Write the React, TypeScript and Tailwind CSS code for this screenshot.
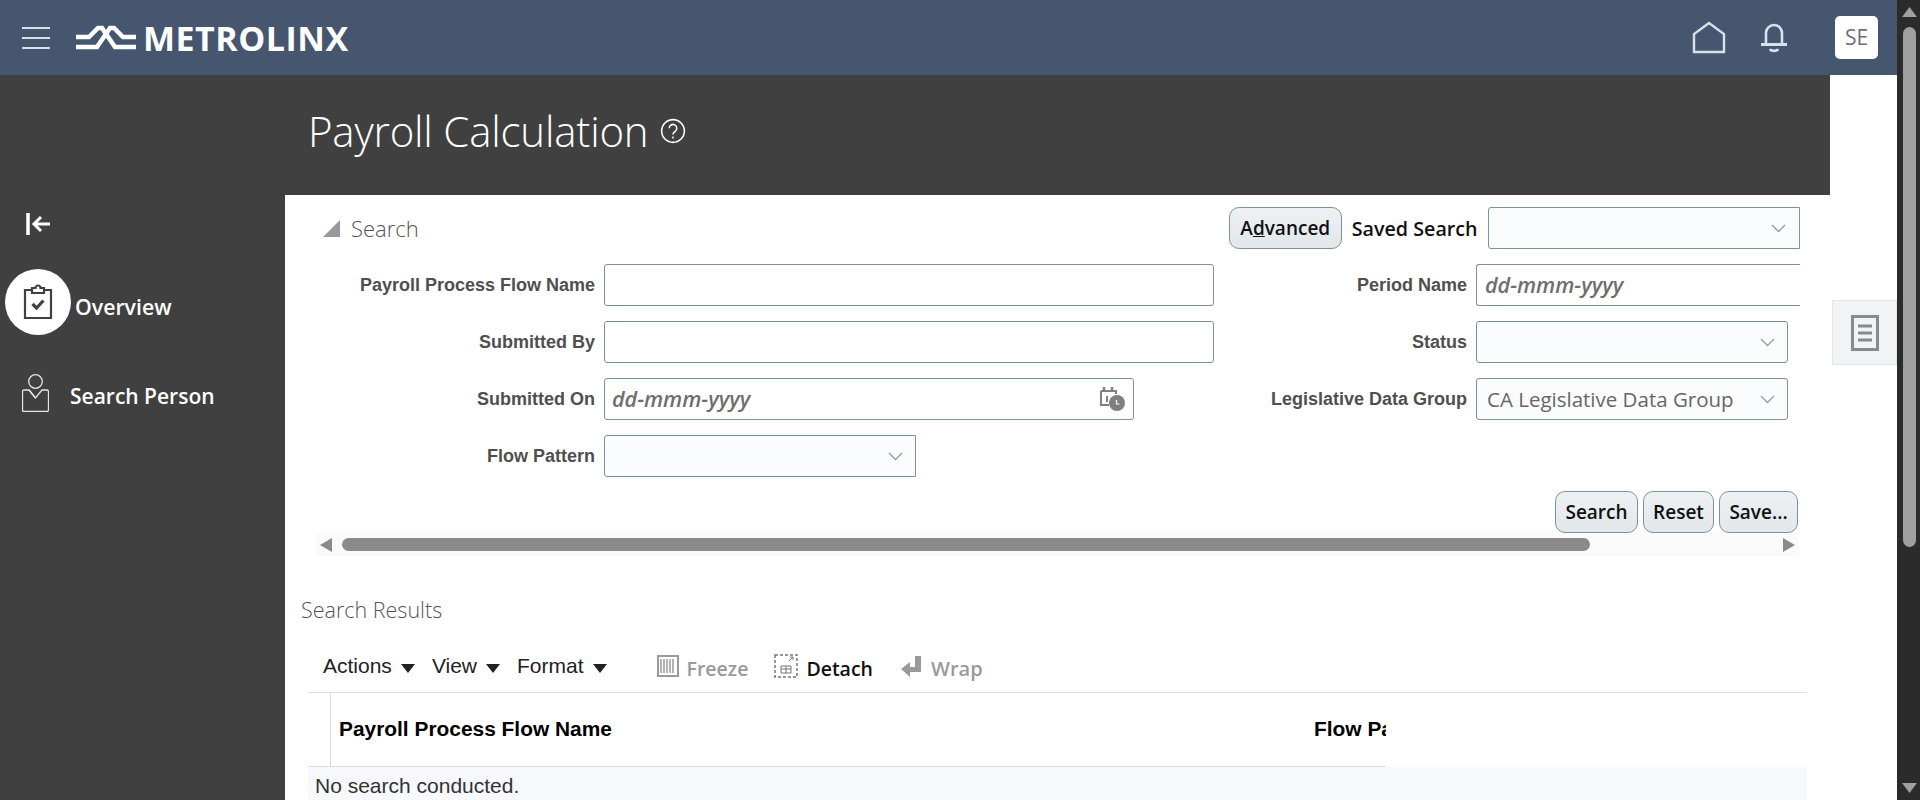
import React from 'react';

const sans = "font-['Open_Sans','Noto_Sans',sans-serif]";
const arial = "font-['Liberation_Sans',Arial,sans-serif]";

const Chevron = () => (
  <svg width="15" height="9" viewBox="0 0 15 9" fill="none" stroke="#989ea4" strokeWidth="1.400">
    <path d="M1 1l6.500 6.500L14 1" />
  </svg>
);

const Caret = () => (
  <svg width="14" height="9" viewBox="0 0 14 9" className="mt-1 ml-[9px] shrink-0" fill="#222">
    <path d="M0 0h14L7 9z" />
  </svg>
);

const Logo = () => (
  <svg width="60" height="26" viewBox="0 0 60 26" fill="none" stroke="#fff" strokeWidth="4.500">
    <path d="M0 12h13l9-9h4l13 19h21" />
    <path d="M60 12H47l-9-9h-4L21 22H0" />
  </svg>
);

const Field = ({ label, children, labelWidth }: { label: string; children: React.ReactNode; labelWidth: string }) => (
  <div className="flex items-start gap-[9px]">
    <div className={`${labelWidth} ${arial} shrink-0 pt-[11px] text-right text-[18px] leading-[20px] font-bold text-[#4f4f4f]`}>
      {label}
    </div>
    {children}
  </div>
);

const box = 'flex h-[42px] items-center rounded-[3px] border border-[#7b929e]';

const Btn = ({ children, className = '' }: { children: React.ReactNode; className?: string }) => (
  <button className={`${sans} flex h-[42px] items-center justify-center rounded-[10px] border border-[#7b929e] bg-gradient-to-b from-[#eef1f3] to-[#e2e7ea] text-[19px] font-semibold text-[#111] ${className}`}>
    {children}
  </button>
);

const dateText = `${sans} text-[21.500px] font-semibold text-[#6e6e6e] italic`;

export default function App() {
  return (
    <div className="flex h-[800px] w-[1920px] overflow-hidden bg-white">
      <div className="flex w-[1897px] flex-col">
        {/* top bar */}
        <header className="flex h-[75px] shrink-0 items-center bg-[#46566f]">
          <div className="ml-[22px] flex w-[28px] flex-col gap-[8px]">
            <div className="h-[2px] bg-[#d8e0ea]" />
            <div className="h-[2px] bg-[#d8e0ea]" />
            <div className="h-[2px] bg-[#d8e0ea]" />
          </div>
          <div className="ml-[26px]"><Logo /></div>
          <div className={`${sans} ml-[7px] text-[34px] leading-none font-bold tracking-[0.5px] text-white`}>METROLINX</div>
          <div className="ml-auto flex items-center">
            <svg width="34" height="33" viewBox="0 0 34 33" fill="none" stroke="#d8e0ea" strokeWidth="2.400">
              <path d="M2 31V13L17 2l15 11v18z" />
            </svg>
            <svg className="ml-[34px]" width="28" height="32" viewBox="0 0 28 32" fill="none" stroke="#d8e0ea" strokeWidth="2.600">
              <path d="M6 21V11a8 8 0 0 1 16 0v10" />
              <path d="M1 22.500h26" strokeWidth="3" />
              <path d="M10 27c1 2.500 7 2.500 8 0" />
            </svg>
            <div className={`${sans} mr-[19px] ml-[47px] flex h-[43px] w-[43px] items-center justify-center rounded-[5px] bg-white text-[21px] text-[#707070]`}>SE</div>
          </div>
        </header>

        <div className="flex min-h-0 flex-1">
          {/* left nav */}
          <nav className="flex w-[285px] shrink-0 flex-col bg-[#404040] text-white">
            <svg className="mt-[137px] ml-[26px] shrink-0" width="25" height="24" viewBox="0 0 25 24" fill="none" stroke="#fff">
              <path d="M2 1v22" strokeWidth="3.500" />
              <path d="M24 12H9M15 5l-7 7 7 7" strokeWidth="3" />
            </svg>
            <div className="mt-[33px] flex items-center">
              <div className="ml-[5px] flex h-[66px] w-[66px] items-center justify-center rounded-full bg-white">
                <svg width="30" height="36" viewBox="0 0 30 36" fill="none" stroke="#404040" strokeWidth="2.200">
                  <path d="M9 6H2v28h26V6h-7" />
                  <path d="M9 9V4h3.500a2.500 2.500 0 0 1 5 0H21v5z" />
                  <path d="M9.500 20l4 4L20.500 16.500" strokeWidth="3.200" />
                </svg>
              </div>
              <span className={`${sans} ml-[4px] pt-[10px] text-[21.300px] font-semibold`}>Overview</span>
            </div>
            <div className="mt-[38px] flex items-center">
              <svg className="ml-[22px]" width="27" height="38" viewBox="0 0 27 38" fill="none" stroke="#e6e6e6" strokeWidth="1.300">
                <circle cx="13.500" cy="7.500" r="6.800" />
                <path d="M7 16H2a1.500 1.500 0 0 0-1.500 1.500V36a1.500 1.500 0 0 0 1.500 1.500h23a1.500 1.500 0 0 0 1.500-1.500V17.500A1.500 1.500 0 0 0 25 16h-5l-6.500 8z" />
                <path d="M7 16l6.500 8" />
              </svg>
              <span className={`${sans} ml-[21px] pt-[8px] text-[21px] font-semibold`}>Search Person</span>
            </div>
          </nav>

          {/* page */}
          <main className="flex w-[1545px] shrink-0 flex-col overflow-hidden">
            <div className="flex h-[120px] shrink-0 items-center bg-[#404040] pb-[8px] pl-[23px]">
              <h1 className={`${sans} text-[42px] leading-none font-light tracking-[-0.2px] text-white`}>Payroll Calculation</h1>
              <svg className="ml-[12px]" width="26" height="26" viewBox="0 0 24 24" fill="none" stroke="#fff" strokeWidth="1.400">
                <circle cx="12" cy="12" r="10.500" />
                <path d="M8.500 9.500a3.500 3.500 0 1 1 5.500 2.800c-1.300.9-2 1.400-2 3" />
                <path d="M12 17v2" />
              </svg>
            </div>

            {/* search panel */}
            <div className="flex shrink-0 items-start pt-[12px] pl-[38px]">
              <svg className="mt-[13px] shrink-0" width="17" height="17" viewBox="0 0 17 17" fill="#969a9e"><path d="M17 0v17H0z" /></svg>
              <span className={`${sans} mt-[6px] ml-[11px] text-[22px] leading-[30px] font-light text-[#555]`}>Search</span>
              <Btn className="ml-[810px] w-[113px] shrink-0"><span>A<u>d</u>vanced</span></Btn>
              <span className={`${sans} ml-[10px] pt-[1px] text-[19.700px] leading-[41px] font-semibold whitespace-nowrap text-[#111]`}>Saved Search</span>
              <div className={`${box} ml-[10px] w-[312px] shrink-0 justify-end rounded-r-none bg-[#fbfcfd] pr-[13px]`}><Chevron /></div>
            </div>

            <div className="mt-[15px] flex shrink-0">
              <div className="flex flex-col gap-[15px]">
                <Field label="Payroll Process Flow Name" labelWidth="w-[310px]">
                  <div className={`${box} w-[610px] bg-white`} />
                </Field>
                <Field label="Submitted By" labelWidth="w-[310px]">
                  <div className={`${box} w-[610px] bg-white`} />
                </Field>
                <Field label="Submitted On" labelWidth="w-[310px]">
                  <div className={`${box} w-[530px] justify-between bg-white pr-[8px] pl-[7px]`}>
                    <span className={dateText}>dd-mmm-yyyy</span>
                    <svg width="25" height="26" viewBox="0 0 25 26" fill="none">
                      <path d="M1 5h15v3M1 5v14h8" stroke="#7f7f7f" strokeWidth="2" />
                      <path d="M4 1v4M12 1v4" stroke="#7f7f7f" strokeWidth="2.500" />
                      <path d="M7 10v6" stroke="#555" strokeWidth="1.500" />
                      <circle cx="17" cy="17" r="8" fill="#7f7f7f" />
                      <path d="M16.500 14v4l3 0" stroke="#fff" strokeWidth="1.200" />
                    </svg>
                  </div>
                </Field>
                <Field label="Flow Pattern" labelWidth="w-[310px]">
                  <div className={`${box} w-[312px] justify-end rounded-r-none bg-[#fbfcfd] pr-[12px]`}><Chevron /></div>
                </Field>
              </div>
              <div className="ml-[17px] flex flex-col gap-[15px]">
                <Field label="Period Name" labelWidth="w-[236px]">
                  <div className={`${box} w-[324px] rounded-r-none border-r-0 bg-white pl-[8px]`}>
                    <span className={dateText}>dd-mmm-yyyy</span>
                  </div>
                </Field>
                <Field label="Status" labelWidth="w-[236px]">
                  <div className={`${box} w-[312px] justify-end bg-[#fbfcfd] pr-[12px]`}><Chevron /></div>
                </Field>
                <Field label="Legislative Data Group" labelWidth="w-[236px]">
                  <div className={`${box} w-[312px] justify-between bg-[#fbfcfd] pr-[12px] pl-[10px]`}>
                    <span className={`${sans} text-[20.500px] whitespace-nowrap text-[#666]`}>CA Legislative Data Group</span>
                    <Chevron />
                  </div>
                </Field>
              </div>
            </div>

            <div className="mt-[14px] flex w-[1513px] shrink-0 justify-end gap-[5px]">
              <Btn className="w-[83px]">Search</Btn>
              <Btn className="w-[71px]">Reset</Btn>
              <Btn className="w-[79px]">Save...</Btn>
            </div>

            {/* horizontal scroller */}
            <div className="ml-[31px] flex h-[23px] w-[1483px] shrink-0 items-center bg-[#fafafa] pr-[4px] pl-[4px]">
              <svg width="12" height="14" viewBox="0 0 12 14" fill="#8a8a8a"><path d="M12 0v14L0 7z" /></svg>
              <div className="ml-[10px] h-[13px] w-[1248px] rounded-full bg-[#8a8a8a]" />
              <svg className="ml-auto" width="12" height="14" viewBox="0 0 12 14" fill="#8a8a8a"><path d="M0 0v14l12-7z" /></svg>
            </div>

            <div className={`${sans} mt-[39px] ml-[16px] shrink-0 text-[21.500px] leading-[30px] font-light text-[#555]`}>Search Results</div>

            {/* toolbar */}
            <div className="mt-[27px] ml-[38px] flex h-[28px] shrink-0 items-center">
              <span className={`${arial} text-[21px] text-[#222]`}>Actions</span><Caret />
              <span className={`${arial} ml-[17px] text-[21px] text-[#222]`}>View</span><Caret />
              <span className={`${arial} ml-[17px] text-[21px] text-[#222]`}>Format</span><Caret />
              <svg className="ml-[50px]" width="22" height="22" viewBox="0 0 22 22" fill="none" stroke="#9a9a9a">
                <rect x="1" y="1" width="20" height="20" strokeWidth="2" />
                <path d="M4 4v14M7 4v14M10 4v14M13 4v14M16 4v14" strokeWidth="1.500" />
              </svg>
              <span className={`${sans} ml-[8px] pt-[6px] text-[19.500px] font-semibold text-[#9a9a9a]`}>Freeze</span>
              <svg className="ml-[26px]" width="24" height="24" viewBox="0 0 24 24" fill="none" stroke="#777">
                <path d="M1 1h22v22H1z" strokeDasharray="3 2" strokeWidth="1.500" />
                <path d="M15 7l4-4m-3 0h3v3" />
                <path d="M7 12h10v7H7zM7 15h10M12 12v7" />
              </svg>
              <span className={`${sans} ml-[8px] pt-[6px] text-[19.500px] font-semibold text-[#111]`}>Detach</span>
              <svg className="ml-[28px]" width="20" height="22" viewBox="0 0 20 22" fill="#9a9a9a">
                <path d="M14 1h6v16H9v5L0 14l9-7v5h5z" />
              </svg>
              <span className={`${sans} ml-[10px] pt-[6px] text-[20px] font-semibold text-[#9a9a9a]`}>Wrap</span>
            </div>

            {/* results table */}
            <div className="mt-[12px] ml-[23px] w-[1499px] shrink-0 border-t border-[#d6dfe6]">
              <div className="flex h-[74px] w-[1078px] border-b border-[#d6dfe6]">
                <div className="w-[23px] border-r border-[#d6dfe6]" />
                <div className={`${arial} flex w-[983px] items-center pb-[2px] pl-[8px] text-[20.900px] font-bold text-black`}>Payroll Process Flow Name</div>
                <div className={`${arial} flex flex-1 items-center overflow-hidden pb-[2px] text-[20.900px] font-bold whitespace-nowrap text-black`}>Flow Pattern</div>
              </div>
              <div className={`${arial} h-[40px] bg-[#f6f8fb] pt-[7px] pl-[7px] text-[21px] leading-[24px] text-[#333]`}>No search conducted.</div>
            </div>
          </main>

          {/* right rail */}
          <aside className="flex-1 pt-[225px] pl-[2px]">
            <div className="flex h-[65px] items-center justify-center border border-[#e2e4e6] bg-[#f2f3f4]">
              <svg width="28" height="36" viewBox="0 0 28 36" fill="none" stroke="#8a8a8a">
                <rect x="1.500" y="1.500" width="25" height="33" strokeWidth="3" />
                <path d="M7 11h14M7 18h14M7 25h14" strokeWidth="3" />
              </svg>
            </div>
          </aside>
        </div>
      </div>

      {/* window scrollbar */}
      <div className="flex w-[23px] flex-col items-center bg-[#2b2b2b] pt-[7px] pb-[7px] pl-[1px]">
        <svg width="15" height="10" viewBox="0 0 15 10" fill="#a0a0a0"><path d="M7.500 0L15 10H0z" /></svg>
        <div className="mt-[10px] h-[520px] w-[13px] rounded-full bg-[#9f9f9f]" />
        <svg className="mt-auto" width="15" height="10" viewBox="0 0 15 10" fill="#a0a0a0"><path d="M0 0h15L7.500 10z" /></svg>
      </div>
    </div>
  );
}
